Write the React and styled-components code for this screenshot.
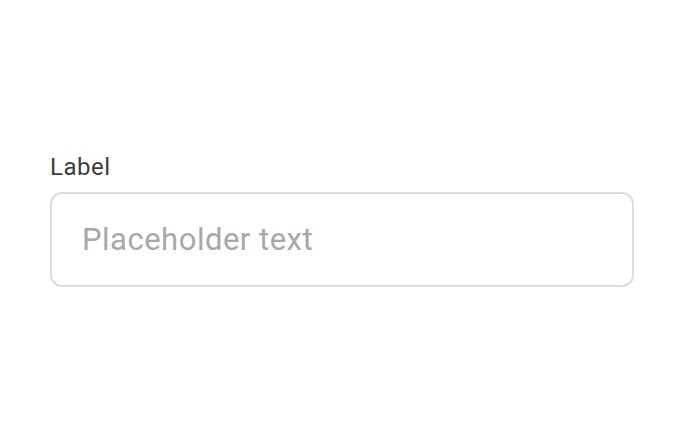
import React from "react";
import styled, { createGlobalStyle } from "styled-components";

const Global = createGlobalStyle`
  html, body { margin: 0; padding: 0; background: #ffffff; }
  body { font-family: Roboto, "Noto Sans", sans-serif; }
`;

const Page = styled.div`
  width: 682px;
  height: 440px;
  display: flex;
  flex-direction: column;
  justify-content: center;
  padding: 0 48px 0 50px;
  box-sizing: border-box;
`;

const Field = styled.div`
  display: flex;
  flex-direction: column;
  gap: 11px;
`;

const Label = styled.label`
  font-size: 24px;
  line-height: 28px;
  letter-spacing: 0.5px;
  color: #3d3d3d;
  font-weight: 400;
`;

const Input = styled.input`
  height: 95px;
  box-sizing: border-box;
  border: 2px solid #dddddd;
  border-radius: 12px;
  padding: 0 30px;
  font-family: Roboto, "Noto Sans", sans-serif;
  font-size: 31px;
  letter-spacing: 0.5px;
  color: #333;
  background: #fff;
  outline: none;
  &::placeholder { color: #a8a8a8; }
`;

export default function App() {
  return (
    <>
      <Global />
      <Page>
        <Field>
          <Label htmlFor="f">Label</Label>
          <Input id="f" placeholder="Placeholder text" />
        </Field>
      </Page>
    </>
  );
}
